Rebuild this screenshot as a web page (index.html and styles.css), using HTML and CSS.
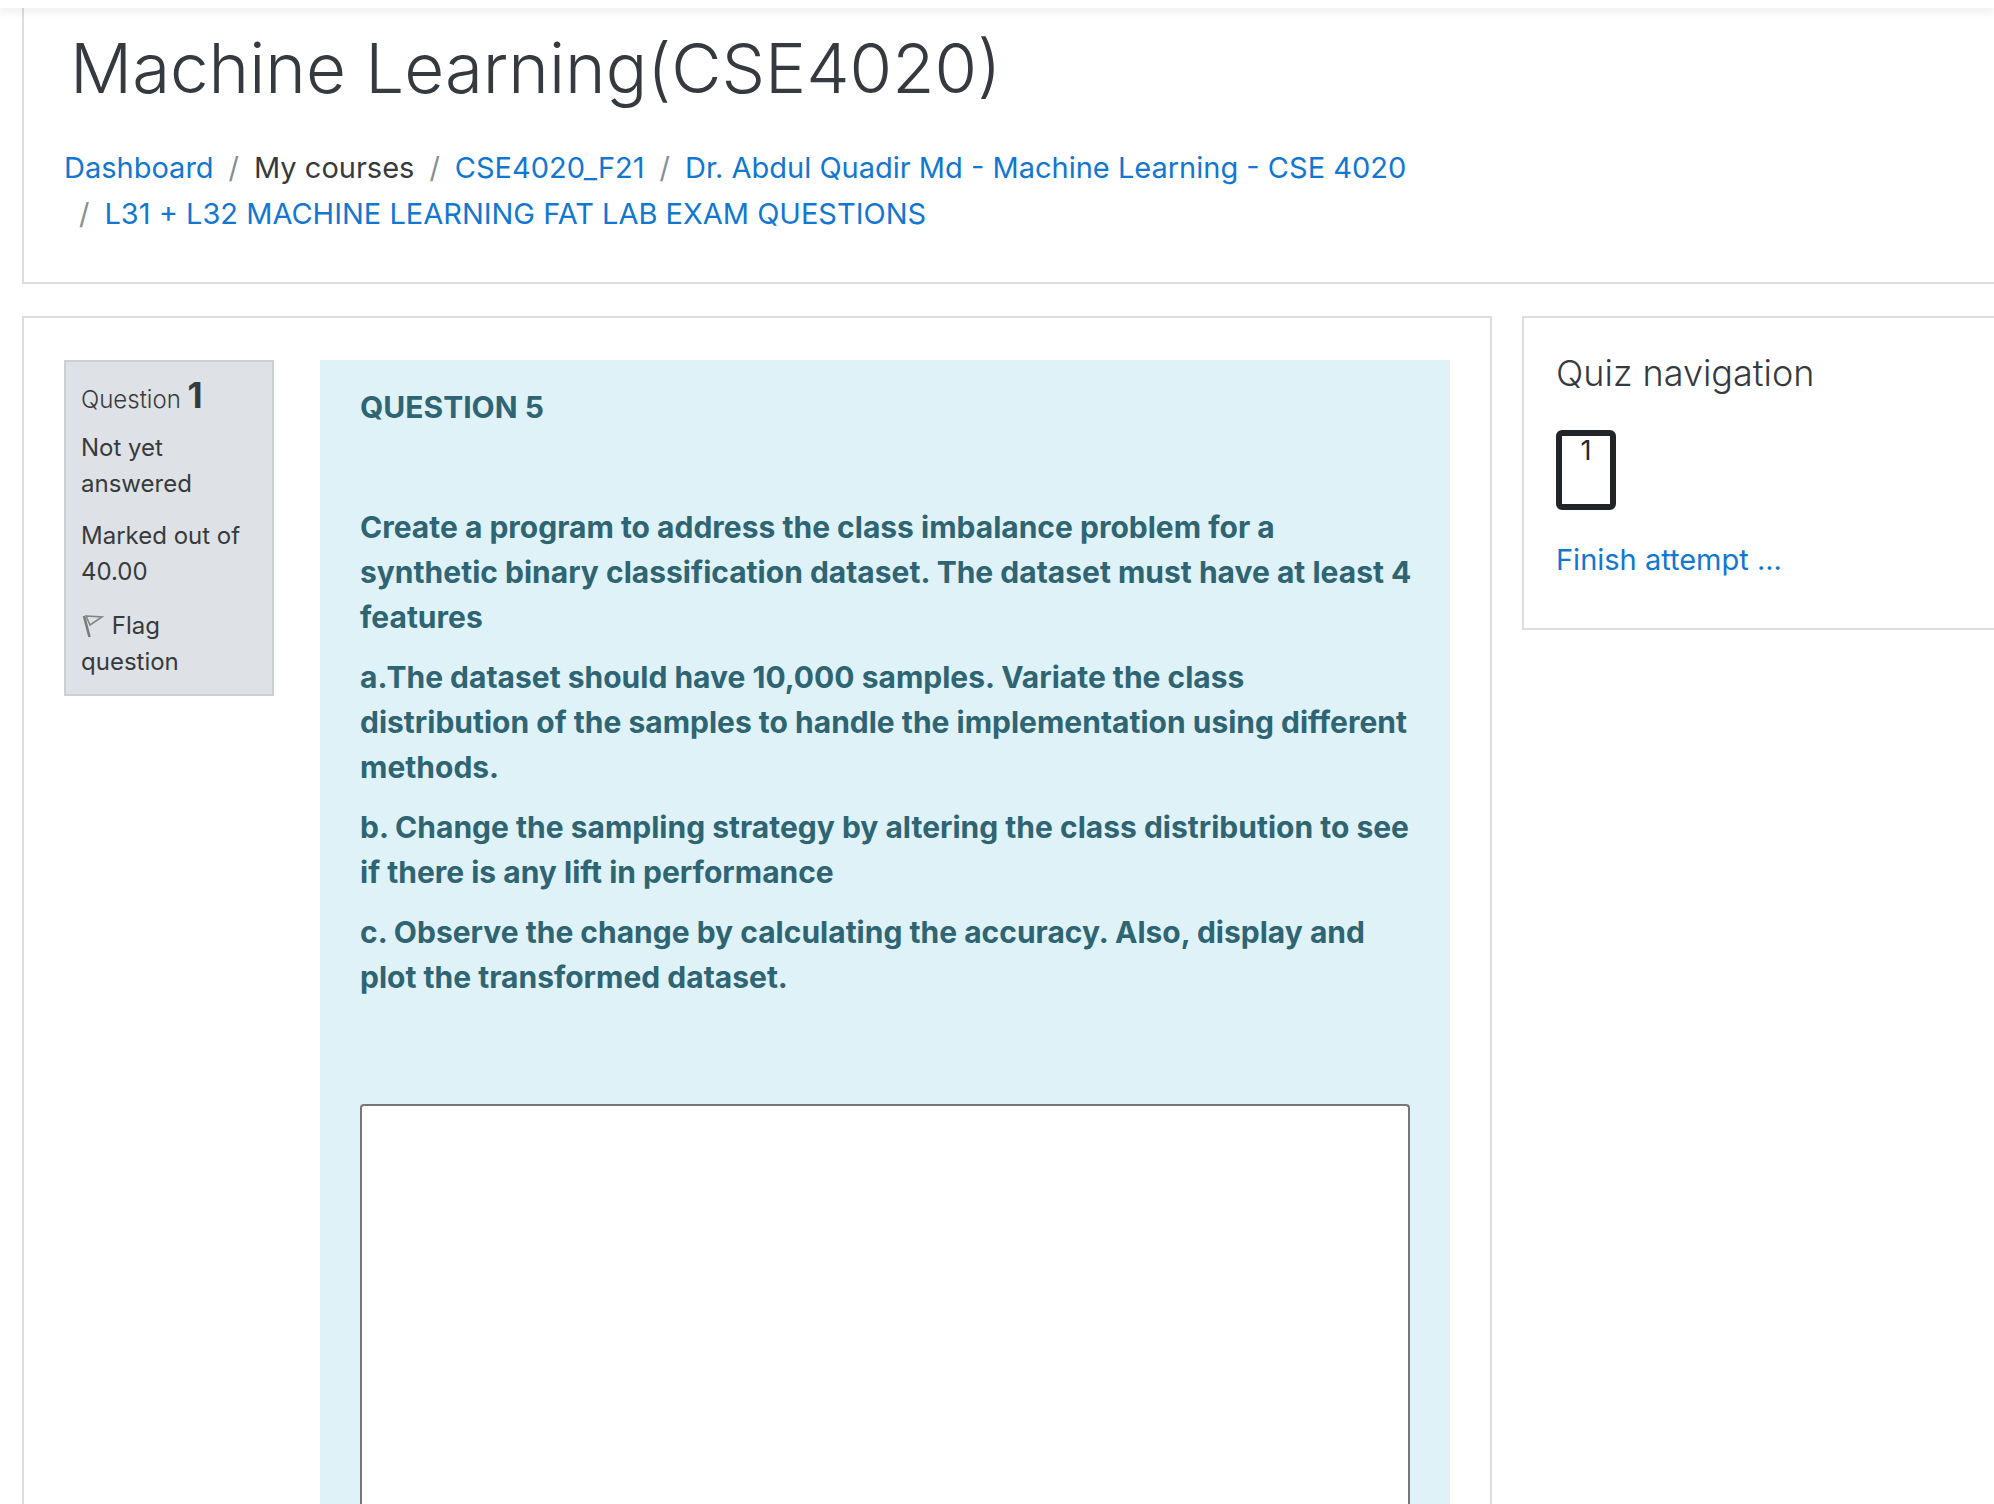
FILE: index.html
```html
<!DOCTYPE html>
<html lang="en">
<head>
<meta charset="utf-8">
<title>Machine Learning(CSE4020)</title>
<link rel="stylesheet" href="styles.css">
</head>
<body>
<div class="topbar"></div>
<header class="page-header">
  <h1 class="page-title">Machine Learning(CSE4020)</h1>
  <nav aria-label="Breadcrumb">
    <ol class="breadcrumb">
      <li><a href="#">Dashboard</a></li>
      <li>My courses</li>
      <li><a href="#">CSE4020_F21</a></li>
      <li><a href="#">Dr. Abdul Quadir Md - Machine Learning - CSE 4020</a></li>
      <li><a href="#">L31 + L32 MACHINE LEARNING FAT LAB EXAM QUESTIONS</a></li>
    </ol>
  </nav>
</header>
<div class="columns">
  <main class="card region-main">
    <section class="info">
      <h2 class="info-number">Question <b>1</b></h2>
      <p>Not yet answered</p>
      <p>Marked out of 40.00</p>
      <p class="flag-row"><a class="flag" href="#"><svg class="flag-icon" viewBox="0 0 24 24" aria-hidden="true"><path d="M3 2 8.500 23" fill="none" stroke="#7d7b79" stroke-width="2.600"/><path d="M5 2 21 3 9 11Z" fill="none" stroke="#868482" stroke-width="1.600"/></svg> Flag question</a></p>
    </section>
    <section class="formulation">
      <div class="question-text">
        <p>QUESTION 5</p>
        <p class="blank"></p>
        <p>Create a program to address the class imbalance problem for a<br>synthetic binary classification dataset. The dataset must have at least 4<br>features</p>
        <p>a.The dataset should have 10,000 samples. Variate the class<br>distribution of the samples to handle the implementation using different<br>methods.</p>
        <p>b. Change the sampling strategy by altering the class distribution to see<br>if there is any lift in performance</p>
        <p>c. Observe the change by calculating the accuracy. Also, display and<br>plot the transformed dataset.</p>
      </div>
      <textarea class="answer" aria-label="Answer text"></textarea>
    </section>
  </main>
  <aside class="card quiz-nav">
    <h2 class="nav-title">Quiz navigation</h2>
    <a class="nav-button" href="#">1</a>
    <a href="#">Finish attempt ...</a>
  </aside>
</div>
</body>
</html>
```
FILE: styles.css
```css
* { box-sizing: border-box; }

body {
  margin: 0;
  height: 100vh;
  display: flex;
  flex-direction: column;
  overflow: hidden;
  background: #fff;
  color: #373a3c;
  font: 400 29px/45px Inter, "Liberation Sans", sans-serif;
}

a { color: #1177d1; text-decoration: none; }
h1, h2, p { margin: 0; }

.topbar {
  flex: none;
  height: 8px;
  background: #fff;
  box-shadow: 0 4px 8px rgba(0, 0, 0, 0.08);
  z-index: 1;
}

.page-header {
  margin-left: 22px;
  padding: 16px 40px 45px;
  border: 2px solid #dedede;
  border-width: 0 0 2px 2px;
}

.page-title {
  padding-left: 6px;
  color: #343a40;
  font-size: 69px;
  font-weight: 300;
  line-height: 88px;
}

.breadcrumb {
  display: flex;
  flex-wrap: wrap;
  max-width: 1400px;
  margin: 0;
  padding: 33px 0 0;
  list-style: none;
  line-height: 46px;
}
.breadcrumb li + li::before {
  content: "/";
  padding: 0 15px;
  color: #868e96;
}

.columns {
  flex: 1;
  min-height: 0;
  display: grid;
  grid-template-columns: minmax(0, 1470fr) minmax(0, 472fr);
  gap: 30px;
  margin-top: 32px;
  padding-left: 22px;
}

.card { border: 2px solid #dedede; }

.region-main {
  display: flex;
  gap: 46px;
  padding: 42px 40px 0;
  border-bottom: 0;
}

.info {
  flex: 0 0 210px;
  align-self: flex-start;
  padding: 15px 15px 14px;
  border: 2px solid #cad0d7;
  background: #dee2e6;
  font-size: 24px;
  line-height: 36px;
}
.info p { margin-top: 16px; }
.info .info-number + p { margin-top: 12px; }
.info .flag-row { margin-top: 18px; }
.info-number { font-size: 24px; font-weight: 300; line-height: 36px; }
.info-number b { font-size: 35px; font-weight: 700; }
.flag { color: inherit; }
.flag-icon { width: 24px; height: 24px; vertical-align: -4px; }

.formulation {
  flex: 1;
  min-width: 0;
  display: flex;
  flex-direction: column;
  padding: 25px 40px 0;
  background: #def2f8;
  color: #2f6473;
}
.question-text {
  font-size: 30px;
  font-weight: 700;
  white-space: nowrap;
}
.question-text p { margin-bottom: 15px; }
.blank { height: 45px; }

.answer {
  flex: 1;
  margin: 89px 0 0;
  padding: 8px;
  border: 2px solid #767676;
  border-bottom: 0;
  border-radius: 4px 4px 0 0;
  resize: none;
  outline: 0;
  background: #fff;
  font: inherit;
}

.quiz-nav {
  align-self: start;
  padding: 33px 32px 46px;
  border-right: 0;
}
.nav-title {
  color: #343a40;
  font-size: 36px;
  font-weight: 300;
  line-height: 45px;
}
.nav-button {
  display: block;
  width: 60px;
  height: 80px;
  margin: 34px 0 27px;
  border: 6px solid #212529;
  border-radius: 6px;
  color: #212529;
  font-size: 27px;
  line-height: 30px;
  text-align: center;
}
```
